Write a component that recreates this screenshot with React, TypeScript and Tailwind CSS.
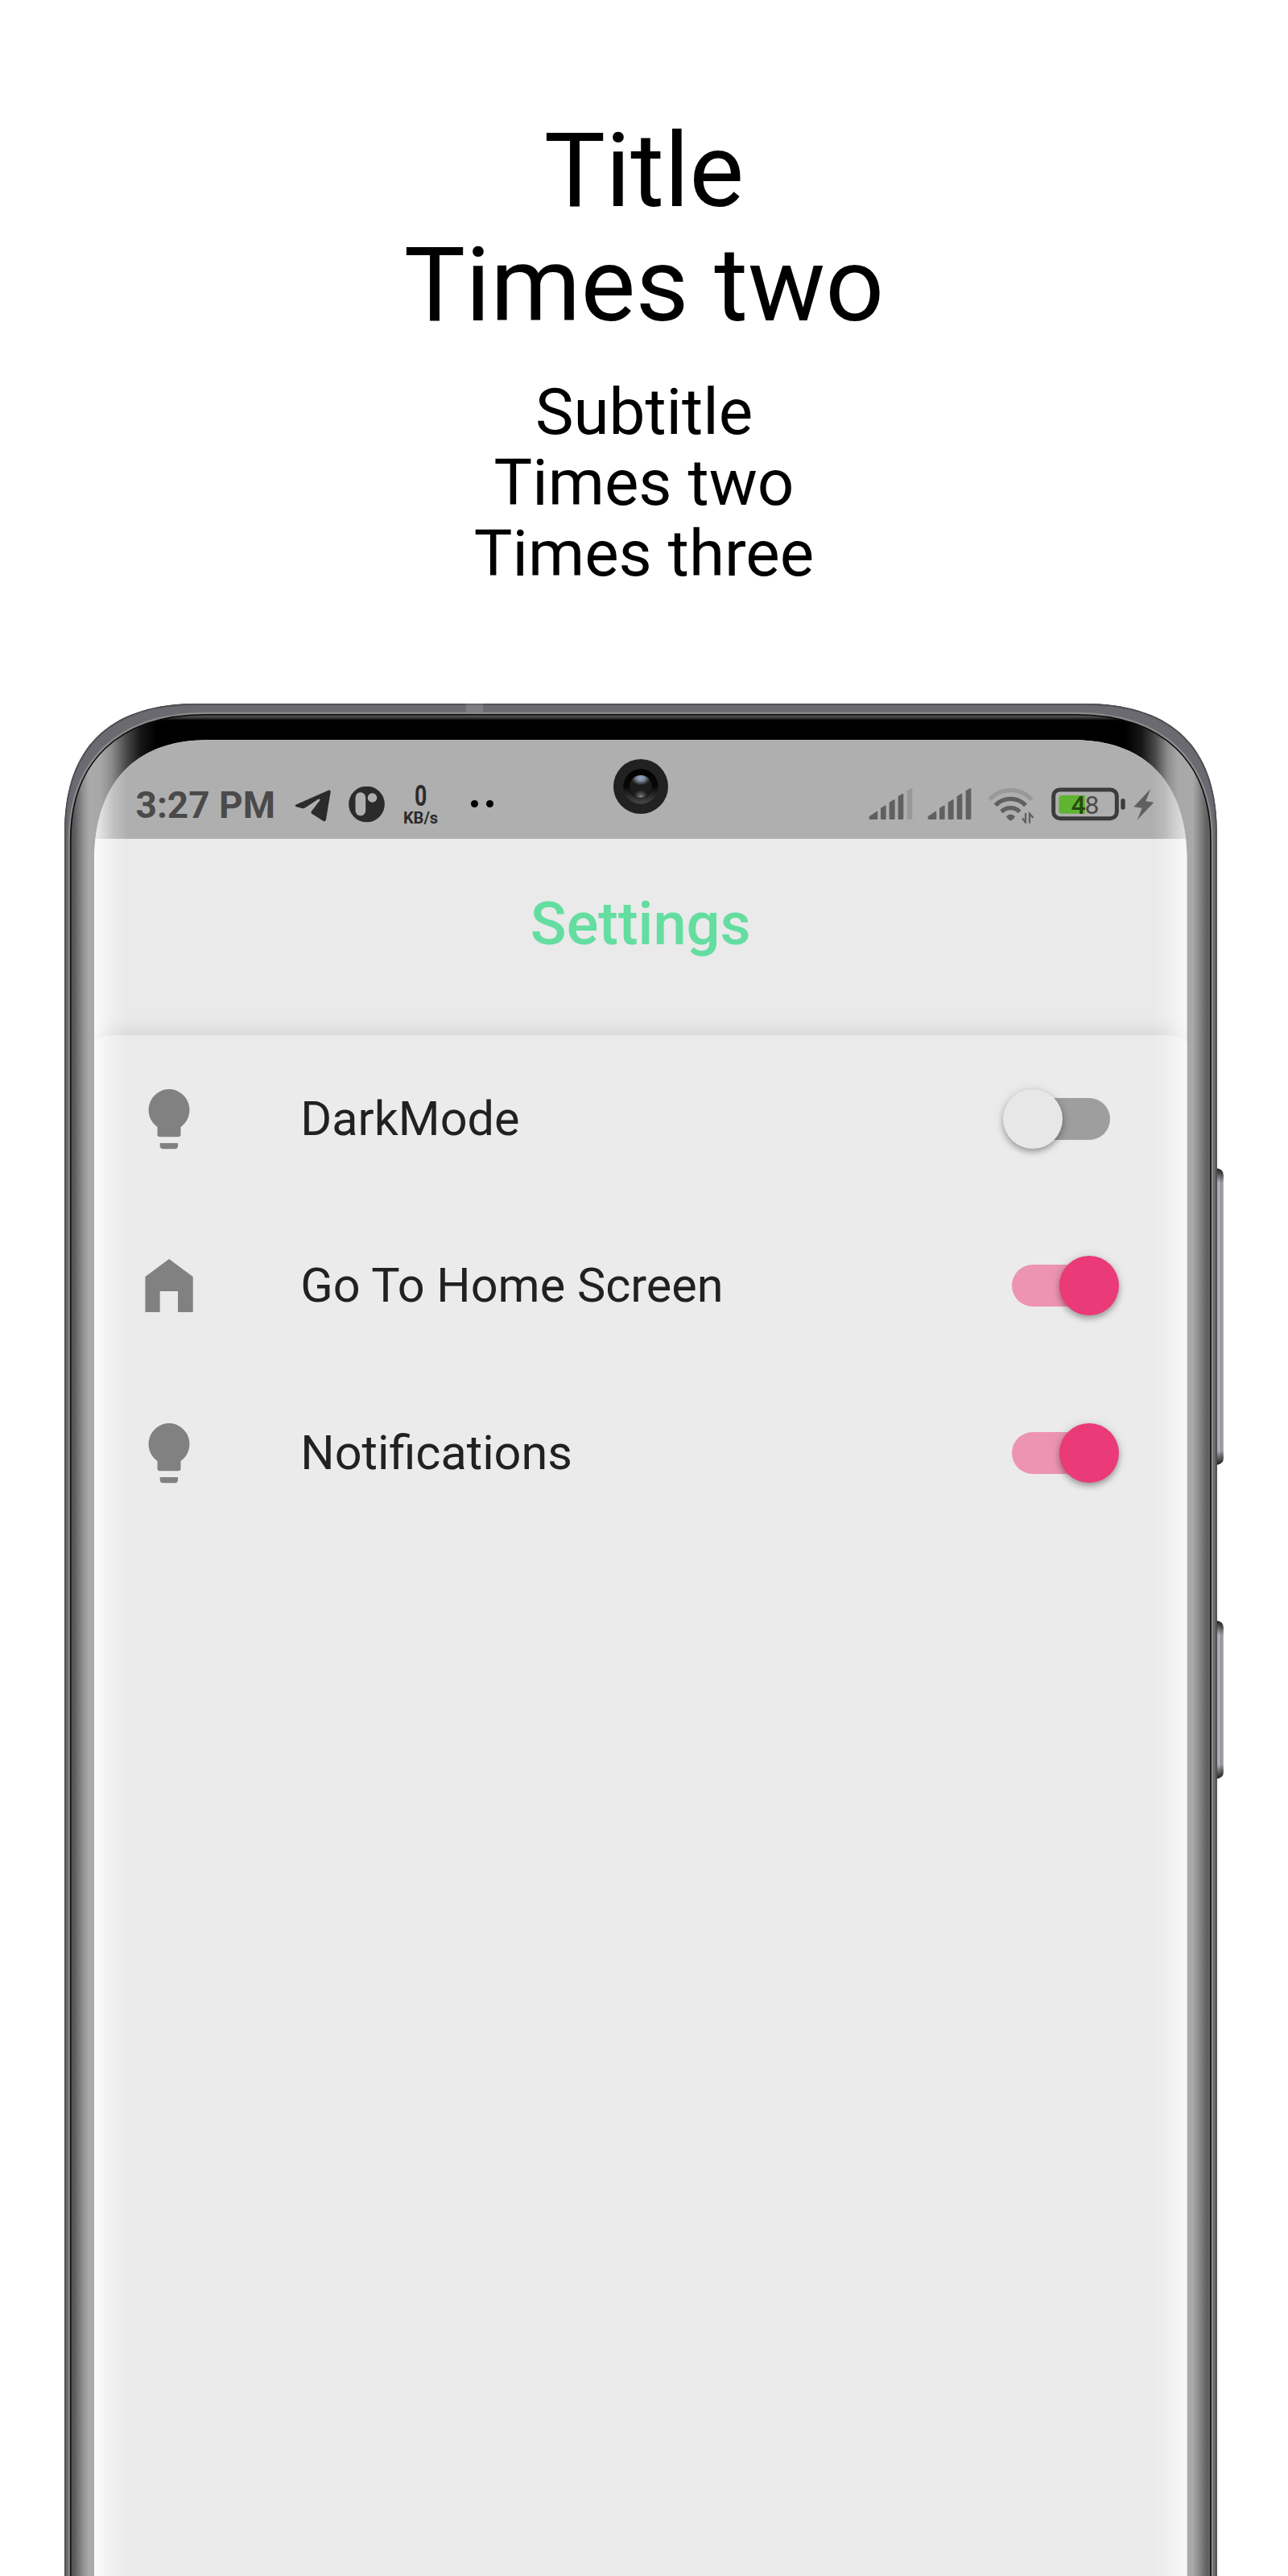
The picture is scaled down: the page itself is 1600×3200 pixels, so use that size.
import React from "react";

const BODY =
  "M0 2360V160C0 55 55 0 165 0H1266.7C1376.7 0 1431.7 55 1431.7 160V2360Z";
const GLASS =
  "M7.7 2360V170C7.7 75 65 13.7 175 13.7H1256.7C1366.7 13.7 1424 75 1424 170V2360Z";

function SideButton({ y, h, id }: { y: number; h: number; id: string }) {
  return (
    <>
      <path
        d={`M1430 ${y}Q1440 ${y + 1} 1440 ${y + 9}V${y + h - 9}Q1440 ${y + h - 1} 1430 ${y + h}Z`}
        fill="url(#btn)"
      />
      <path
        d={`M1430 ${y}Q1440 ${y + 1} 1440 ${y + 9}V${y + h - 9}Q1440 ${y + h - 1} 1430 ${y + h}Z`}
        fill={`url(#${id})`}
      />
    </>
  );
}

function EndShade({ id, size }: { id: string; size: number }) {
  return (
    <linearGradient id={id} x1="0" y1="0" x2="0" y2="1">
      <stop offset="0" stopColor="#1c1c1c" />
      <stop offset={6 / size} stopColor="#1c1c1c" stopOpacity="0.7" />
      <stop offset={18 / size} stopColor="#1c1c1c" stopOpacity="0" />
      <stop offset={1 - 18 / size} stopColor="#1c1c1c" stopOpacity="0" />
      <stop offset={1 - 6 / size} stopColor="#1c1c1c" stopOpacity="0.7" />
      <stop offset="1" stopColor="#1c1c1c" />
    </linearGradient>
  );
}

function Frame() {
  return (
    <svg className="absolute inset-0" width="1442" height="2326" viewBox="0 0 1442 2326" aria-hidden="true">
      <defs>
        <clipPath id="bodyClip">
          <path d={BODY} />
        </clipPath>
        <clipPath id="glassClip">
          <path d={GLASS} />
        </clipPath>
        <linearGradient id="glass" x1="0" x2="1432" gradientUnits="userSpaceOnUse">
          <stop offset="0.006" stopColor="#525252" />
          <stop offset="0.009" stopColor="#5e5e5e" />
          <stop offset="0.016" stopColor="#909090" />
          <stop offset="0.0215" stopColor="#aaaaaa" />
          <stop offset="0.031" stopColor="#a8a8a8" />
          <stop offset="0.041" stopColor="#8c8c8c" />
          <stop offset="0.054" stopColor="#484848" />
          <stop offset="0.066" stopColor="#161616" />
          <stop offset="0.08" stopColor="#000" />
          <stop offset="0.92" stopColor="#000" />
          <stop offset="0.934" stopColor="#161616" />
          <stop offset="0.946" stopColor="#484848" />
          <stop offset="0.957" stopColor="#8c8c8c" />
          <stop offset="0.966" stopColor="#a8a8a8" />
          <stop offset="0.979" stopColor="#a9a9a9" />
          <stop offset="0.986" stopColor="#808080" />
          <stop offset="0.991" stopColor="#606060" />
          <stop offset="1" stopColor="#686868" />
        </linearGradient>
        <linearGradient id="lip" x1="0" x2="0" y1="13" y2="21" gradientUnits="userSpaceOnUse">
          <stop offset="0" stopColor="#5a5a5a" />
          <stop offset="0.5" stopColor="#444" />
          <stop offset="1" stopColor="#444" stopOpacity="0" />
        </linearGradient>
        <linearGradient id="btn" x1="1431" x2="1440" gradientUnits="userSpaceOnUse">
          <stop offset="0" stopColor="#8a8a8e" />
          <stop offset="0.2" stopColor="#b2b2b8" />
          <stop offset="0.5" stopColor="#acacb1" />
          <stop offset="0.65" stopColor="#8c8c8f" />
          <stop offset="1" stopColor="#b8b8ba" />
        </linearGradient>
        <EndShade id="endsA" size={369} />
        <EndShade id="endsB" size={197} />
      </defs>
      <SideButton y={577} h={369} id="endsA" />
      <SideButton y={1139} h={197} id="endsB" />
      <g clipPath="url(#bodyClip)">
        <path d={BODY} fill="#6b6a70" />
        <path d={BODY} fill="none" stroke="#58585d" strokeWidth="4" />
        <path d={BODY} fill="none" stroke="#4c4c50" strokeWidth="2" />
        <rect x="499" y="0" width="21" height="13" fill="#fff" fillOpacity="0.13" />
        <path d={GLASS} fill="none" stroke="#8b8b8c" strokeWidth="6" />
      </g>
      <path d={GLASS} fill="url(#glass)" />
      <g clipPath="url(#glassClip)">
        <rect x="120" y="13" width="1192" height="8" fill="url(#lip)" />
      </g>
      <path d={GLASS} fill="none" stroke="#0c0c0c" strokeWidth="1.6" />
    </svg>
  );
}

function Camera() {
  return (
    <svg className="absolute left-1/2 top-[23.7px] -translate-x-1/2" width="68" height="68" viewBox="-34 -34 68 68">
      <defs>
        <linearGradient id="ring" x1="0" x2="0" y1="0" y2="1">
          <stop offset="0" stopColor="#000" />
          <stop offset="0.5" stopColor="#080808" />
          <stop offset="1" stopColor="#484848" />
        </linearGradient>
        <radialGradient id="shine" cx="0" cy="-10.5" r="12" gradientTransform="matrix(1 0 0 0.75 0 -2.6)" gradientUnits="userSpaceOnUse">
          <stop offset="0" stopColor="#93a7cb" />
          <stop offset="0.4" stopColor="#808ba0" />
          <stop offset="1" stopColor="#808080" stopOpacity="0" />
        </radialGradient>
        <radialGradient id="glow" cx="0" cy="13" r="9" gradientUnits="userSpaceOnUse">
          <stop offset="0" stopColor="#888" />
          <stop offset="1" stopColor="#666" stopOpacity="0" />
        </radialGradient>
      </defs>
      <circle r="34" fill="#212121" />
      <circle r="21.7" fill="url(#ring)" />
      <circle r="14.3" fill="#1c1c1c" stroke="#080808" strokeWidth="0.8" />
      <circle r="14" fill="url(#shine)" />
      <circle r="14" fill="url(#glow)" />
    </svg>
  );
}

function TelegramIcon() {
  return (
    <svg className="ml-[22px]" width="45" height="46" viewBox="646 80 135 138" fill="#2b2b2b">
      <path d="M653 147L772 94Q781 91 780 100L763 203Q761 213 752 208L712 183Q704 178 709 172L740 132Q742 124 734 127L686 159Q680 163 673 161L653 156Q643 152 653 147Z" />
    </svg>
  );
}

function PIcon() {
  return (
    <svg className="ml-[22px]" width="45" height="46" viewBox="848.5 80 135 138">
      <circle cx="916" cy="146" r="67" fill="#2b2b2b" />
      <rect x="874" y="102" width="38" height="87" rx="19" fill="#afafaf" />
      <circle cx="937" cy="122" r="17.5" fill="#afafaf" />
    </svg>
  );
}

function NetSpeed() {
  return (
    <div className="ml-[21px] flex w-[48px] flex-col items-center font-bold text-[#2b2b2b]">
      <span className="-mt-[7px] inline-block scale-x-[0.72] text-[37px] leading-[38px]">0</span>
      <span className="-mt-[1px] text-[20px] leading-[18px]">KB/s</span>
    </div>
  );
}

function Dots() {
  return (
    <div className="ml-[38px] mt-[17px] flex gap-[10px]">
      <span className="size-[9px] rounded-full bg-black" />
      <span className="size-[9px] rounded-full bg-black" />
    </div>
  );
}

function Signal({ weak }: { weak?: boolean }) {
  return (
    <svg className="mr-[18px]" width="55" height="46" viewBox="58 80 165 138" fill="#606060">
      <path d="M60 192L88 173Q92 171 92 176V199Q92 203 88 203H63Q60 203 60 200Z" />
      <path d="M103 160L119 151Q123 149 123 154V199Q123 203 119 203H107Q103 203 103 199Z" />
      <path d="M135 139L152 129Q156 127 156 132V199Q156 203 152 203H139Q135 203 135 199Z" />
      <path d="M168 117L184 107Q188 105 188 110V199Q188 203 184 203H172Q168 203 168 199Z" />
      <path d="M201 96L217 87Q221 85 221 90V199Q221 203 217 203H205Q201 203 201 199Z" fill={weak ? "#999999" : "#606060"} />
    </svg>
  );
}

function Wifi() {
  return (
    <svg className="ml-px mr-[20px]" width="60" height="46" viewBox="500 80 180 138" fill="none">
      <path d="M509 129A106 106 0 0 1 667 129" stroke="#999" strokeWidth="16" />
      <path d="M532 150A78 78 0 0 1 644 150" stroke="#606060" strokeWidth="16" />
      <path d="M554 174A48 48 0 0 1 622 174" stroke="#606060" strokeWidth="16" />
      <path d="M572 192Q588 175 605 192Q600 203 588 208Q577 203 572 192Z" fill="#606060" />
      <path d="M644 179V214L632 198M659 217V182L673 197" stroke="#606060" strokeWidth="7" />
    </svg>
  );
}

function Battery() {
  return (
    <div className="relative mr-[10px]">
      <svg width="92" height="46" viewBox="737 80 276 138">
        <rect x="745" y="92" width="236" height="107" rx="24" fill="none" stroke="#3c3c3c" strokeWidth="15" />
        <path d="M777 113H863V181H777Q765 181 765 169V125Q765 113 777 113Z" fill="#5fb432" />
        <rect x="996" y="125" width="16" height="41" rx="8" fill="#3c3c3c" />
      </svg>
      <div className="absolute left-[25px] top-[7px] flex text-[32px] leading-[33px]">
        <span className="w-[17px] font-medium text-[#234a10]">4</span>
        <span className="text-[#4a4a4a]">8</span>
      </div>
    </div>
  );
}

function Bolt() {
  return (
    <svg width="26" height="46" viewBox="1044 80 78 138" fill="#606060">
      <path d="M1108 89L1045 156L1076 160L1058 205L1120 139L1090 135Z" />
    </svg>
  );
}

function StatusBar() {
  return (
    <div className="relative flex h-[122.5px] items-start bg-[#afafaf] pl-[51.5px] pr-[41px] pt-[57.7px]">
      <span className="-mt-[1px] w-[175px] whitespace-nowrap text-[46px] font-bold leading-[48px] text-[#4a4a4a]">3:27 PM</span>
      <TelegramIcon />
      <PIcon />
      <NetSpeed />
      <Dots />
      <Camera />
      <div className="ml-auto flex">
        <Signal weak />
        <Signal />
        <Wifi />
        <Battery />
        <Bolt />
      </div>
    </div>
  );
}

function BulbIcon() {
  return (
    <svg width="64" height="80" viewBox="0 0 64 80" fill="#818181">
      <path d="M32 3A25.8 25.8 0 0 1 46.5 49.9V59.3Q46.5 62.3 43.5 62.3H20.5Q17.5 62.3 17.5 59.3V49.9A25.8 25.8 0 0 1 32 3Z" />
      <path d="M20.7 70H43V74Q42.5 77.3 39 77.3H25Q21.2 77.3 20.7 74Z" />
    </svg>
  );
}

function HomeIcon() {
  return (
    <svg width="64" height="80" viewBox="0 0 64 80" fill="#818181">
      <path d="M32 7L61.7 29V73H43V47H20.7V73H2.4V29Z" />
    </svg>
  );
}

function Toggle({ on }: { on: boolean }) {
  return (
    <div
      className={
        on
          ? "flex h-[52px] w-[122px] items-center justify-end rounded-full bg-[#ec94b1]"
          : "flex h-[52px] w-[122px] items-center justify-start rounded-full bg-[#9e9e9e]"
      }
    >
      <div
        className={
          on
            ? "-mr-[11px] size-[74px] shrink-0 rounded-full bg-[#ea3a77] shadow-[0_4px_7px_rgba(0,0,0,0.28),0_1px_14px_rgba(0,0,0,0.12)]"
            : "-ml-[11px] size-[74px] shrink-0 rounded-full bg-[#e7e7e7] shadow-[0_4px_7px_rgba(0,0,0,0.28),0_1px_14px_rgba(0,0,0,0.12)]"
        }
      />
    </div>
  );
}

const ROWS = [
  { label: "DarkMode", icon: <BulbIcon />, on: false },
  { label: "Go To Home Screen", icon: <HomeIcon />, on: true },
  { label: "Notifications", icon: <BulbIcon />, on: true },
];

function Screen() {
  return (
    <main className="relative ml-[37px] flex h-[2281px] w-[1357.5px] flex-col bg-[#eaeaea] [clip-path:path('M0_2281V150C0_55_50_0_140_0H1217.5C1307.5_0_1357.5_55_1357.5_150V2281Z')]">
      <StatusBar />
      <h3 className="h-[244px] pt-[66px] text-center text-[74px] font-medium leading-[80px] text-[#64dda1]">Settings</h3>
      <section className="flex grow flex-col bg-[#ebebeb] shadow-[0_-4px_26px_rgba(0,0,0,0.1)] [border-top-left-radius:30px_11px] [border-top-right-radius:30px_11px]">
        {ROWS.map((row) => (
          <div key={row.label} className="flex h-[207.5px] items-center pl-[61.3px] pr-[95.5px]">
            {row.icon}
            <span className="ml-[131px] grow text-[59.4px] leading-[70px] text-[#212121]">{row.label}</span>
            <Toggle on={row.on} />
          </div>
        ))}
      </section>
      <div className="absolute inset-y-0 left-0 w-[42px] bg-[linear-gradient(to_right,rgba(255,255,255,0.8),rgba(255,255,255,0.55)_25%,rgba(255,255,255,0.2)_60%,rgba(255,255,255,0))]" />
      <div className="absolute inset-y-0 right-0 w-[44px] bg-[linear-gradient(to_left,rgba(255,255,255,0.65),rgba(255,255,255,0.45)_30%,rgba(255,255,255,0.15)_65%,rgba(255,255,255,0))]" />
    </main>
  );
}

export default function App() {
  return (
    <div className="flex h-[3200px] w-[1600px] flex-col overflow-hidden bg-white font-['Roboto',sans-serif]">
      <header className="flex h-[874px] shrink-0 flex-col gap-[43px] pt-[141px] text-center text-black">
        <h1 className="text-[128px] leading-[142px]">
          Title
          <br />
          Times two
        </h1>
        <h2 className="text-[80px] leading-[88px]">
          Subtitle
          <br />
          Times two
          <br />
          Times three
        </h2>
      </header>
      <div className="relative ml-[80px] h-[2326px] w-[1442px] shrink-0 pt-[45.3px]">
        <Frame />
        <Screen />
      </div>
    </div>
  );
}
